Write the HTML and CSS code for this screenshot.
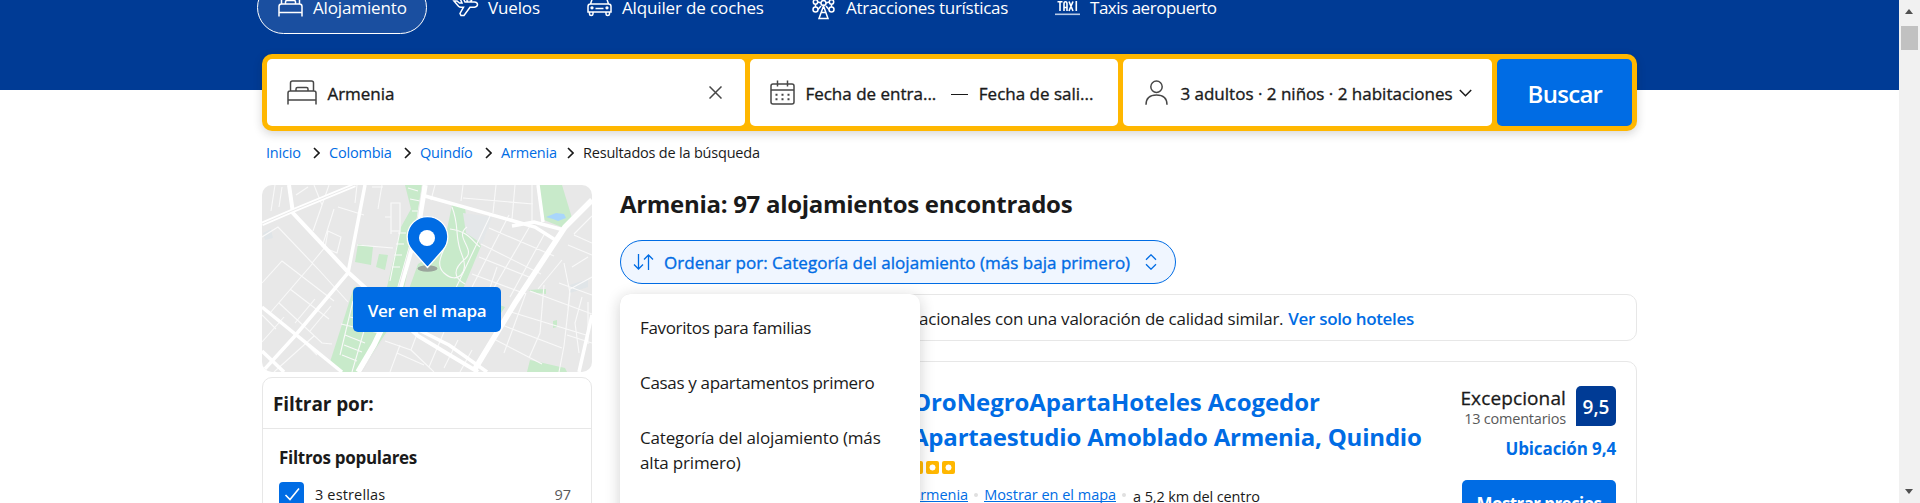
FILE: index.html
```html
<!DOCTYPE html>
<html lang="es">
<head>
<meta charset="utf-8">
<title>Armenia: 97 alojamientos encontrados</title>
<link rel="stylesheet" href="styles.css">
</head>
<body>
<div class="page">
  <header class="header">
    <nav class="nav">
      <a class="tab tab-active tab-stays"><svg class="tab-icon" viewBox="0 0 25 25"><path d="M3.500 11V4q0-2 2-2h14q2 0 2 2v7M1 23.500v-10q0-2.500 2.500-2.500h18q2.500 0 2.500 2.500v10M1 19.500h23M7.500 11V9q0-1.500 1.500-1.500h7q1.500 0 1.500 1.500v2"/></svg><span>Alojamiento</span></a>
      <a class="tab tab-flights"><svg class="tab-icon" viewBox="0 0 25 25"><path d="M1 8l4.500 5.200q1 1 2.500 1h2.500L7 20.500l1 2h3l6-8.300h4.500q3-.3 3-2.600T21.500 9H12L9.500 4h-3L9 10H6.500L4 8zM14.500 9l-1-3.500M17.500 9l1.500-2.500h-4"/></svg><span>Vuelos</span></a>
      <a class="tab tab-cars"><svg class="tab-icon" viewBox="0 0 25 25"><path d="M3.500 11l2-6q.7-2 2.500-2h9q1.800 0 2.500 2l2 6M3.500 11h18q2.500 0 2.500 2.500V19H1v-5.500Q1 11 3.500 11zM2.500 19v2q0 1.500 1.700 1.500T6 21v-2M19 19v2q0 1.500 1.700 1.500t1.800-1.500v-2M8.500 15.500h8"/><circle cx="5" cy="14.800" r=".9"/><circle cx="20" cy="14.800" r=".9"/></svg><span>Alquiler de coches</span></a>
      <a class="tab tab-sights"><svg class="tab-icon" viewBox="0 0 25 25"><circle cx="12.500" cy="10" r="2.500"/><circle cx="4.500" cy="9" r="2.200"/><circle cx="4.500" cy="16.500" r="2.500"/><circle cx="20.500" cy="9" r="2.200"/><circle cx="20.500" cy="16.500" r="2.500"/><path d="M12.500 13l-4.500 12.500h9L12.500 13zM7 16.500l3-3.500M18 16.500L15 13M4.500 11.500V14M20.500 11.500V14M7 9l3 1M18 9l-3 1M10.500 19.500h4"/></svg><span>Atracciones turísticas</span></a>
      <a class="tab tab-taxi"><svg class="tab-icon" viewBox="0 0 25 25"><path class="thick" d="M2.500 9.800h5M5 9.800V19M9 19v-7q0-2.200 1.500-2.200T12 12v7M9 15.500h3M14 9.500l4 9.500M18 9.500L14 19M21.300 9v10"/><path class="rule" d="M0 22.300h25"/></svg><span>Taxis aeropuerto</span></a>
    </nav>
  </header>

  <form class="search">
    <div class="field field-place">
      <svg class="icon-bed" viewBox="0 0 30 25"><path d="M3.500 11V3q0-2 2-2h19q2 0 2 2v8M1 24.500V13q0-2 2-2h24q2 0 2 2v11.500M1 20h28M9 11V9q0-1.500 1.500-1.500h9Q21 7.500 21 9v2"/></svg>
      <span class="field-text">Armenia</span>
      <svg class="icon-clear" viewBox="0 0 13 13"><path d="M.5.5l12 12M12.500.5l-12 12"/></svg>
    </div>
    <div class="field field-dates">
      <svg class="icon-cal" viewBox="0 0 25 25"><path d="M3 4h19q2 0 2 2v16q0 2-2 2H3q-2 0-2-2V6q0-2 2-2zM1 10h23M7.500.5v6M17.500.5v6"/><path class="dots" d="M5.500 14.800h2m4 0h2m4 0h2M5.500 19.300h2m4 0h2m4 0h2"/></svg>
      <span class="field-text date-from">Fecha de entra...</span>
      <span class="dash"></span>
      <span class="field-text">Fecha de sali...</span>
    </div>
    <div class="field field-guests">
      <svg class="icon-person" viewBox="0 0 23 25"><circle cx="11.500" cy="6.700" r="5.700"/><path d="M1 24.800C1 18.500 5 15 11.500 15S22 18.500 22 24.800"/></svg>
      <span class="field-text guests-text">3 adultos · 2 niños · 2 habitaciones</span>
      <svg class="icon-down" viewBox="0 0 13 8"><path d="M.8 1l5.700 5.700L12.200 1"/></svg>
    </div>
    <button class="search-btn" type="button">Buscar</button>
  </form>

  <ol class="crumbs">
    <li class="c-inicio"><a>Inicio</a></li>
    <li class="c-colombia"><svg viewBox="0 0 7 12"><path d="M1 1l5 5-5 5"/></svg><a>Colombia</a></li>
    <li class="c-quindio"><svg viewBox="0 0 7 12"><path d="M1 1l5 5-5 5"/></svg><a>Quindío</a></li>
    <li class="c-armenia"><svg viewBox="0 0 7 12"><path d="M1 1l5 5-5 5"/></svg><a>Armenia</a></li>
    <li><svg viewBox="0 0 7 12"><path d="M1 1l5 5-5 5"/></svg><span>Resultados de la búsqueda</span></li>
  </ol>

  <div class="columns">
    <aside class="side">
      <div class="map">
        <svg class="map-art" viewBox="0 0 330 187">
          <rect width="330" height="187" fill="#e8e8e8"/>
          <g fill="#c8eaca">
            <path d="M143 0h20l-9 44-12 60-12 35-32 48H80l-12-10 24-75h33l14-60 10-18z"/>
            <path d="M190 20l13 2 2 18 14 21-18 43h-54l9-25 25-15z"/>
            <path d="M277 0h23l10 33-8 10-20-8z"/>
            <path d="M96 59l15 3-2 18-16-3zM117 69l9 1-3 15-9-3zM266 105l18-1v5l-9-1zM291 136l4-1v7l-4 1zM268 175l35 8 2 4h-40zM235 119l8 3-8 12z"/>
          </g>
          <path d="M201 28l29 4-10 27-16-11z" fill="#e4e7e9"/>
          <path d="M284 32l10-4 8 1 2 4-8 3-5-2z" fill="#a9d6fb"/>
          <path d="M308 100l18-6v8l-18 6zM1 48l8-4 2 9-8 2z" fill="#e0e5e8"/>
          <g class="minor">
            <path d="M13 0l-4 26M20 2l-3 20M34 10l12-8M52 0l8 20M67 0l-16 46M95 0l-2 18M76 22l26 8M72 24l-12 38M0 52l16-10 40 42 30 33M50 78l14-17M66 46l13 6-4 16-12-5zM0 98l20-22 52 40M17 118l43 40 10 1M28 104l39 30M8 128L51 78M33 138l20-24M48 146l21-25M0 130l14 14M0 157l22-25M12 187l40-36M37 152l18 18M95 60l36 3M110 2l11 0M120 0l-4 24M129 18h9v28h-9zM123 32h6v17"/>
            <path d="M138 46l-10 50M144 48h-8M142 59h-8M140 70h-8M138 82h-8M146 3l10 3M148 14l10 2M150 26h8M79 139l38 9M91 116l-13 54M83 150l20 8M82 160l18 7M80 170l15 6M88 132l26 6M104 139l-14 48M123 156l26 9 13-35M138 160l-10 27M149 165l23 22M182 147l-15 35M196 155l-14 28M210 165l-12 22M135 168l27 12"/>
            <path d="M173 0l-4 15M201 0l-2 16M234 0l-3 28M253 0l-3 34M270 0v38M201 13l70 6M229 29l-37 78M227 43l65 28M219 59l60 30M217 72l55 22M210 89l54 20M205 104l31 12M247 30l-38 74M268 41l-38 65M283 48l-35 64M235 82l-12 35M268 106l62 23M249 127l75 23M240 140l60 23M230 153l50 26M264 108l-22 60M282 100l-4 48-11 25M302 78l6 30-6 53-5 26M300 75l-24 29M297 98l33 12M330 92l-22 12-2 20M310 82l16-10M306 60l24 10M312 50l18 8M330 31l-18 18M320 112l-7 26 4 30M326 117v42M305 150l25 8"/>
            <path d="M190 22c8 20 2 30 10 48s-5 30-18 18 8-30 2-36M205 42c-14 10 10 22-2 32s-12 18 0 25M188 44c18 2 22 12 30 18"/>
          </g>
          <g class="road">
            <path d="M163 0l-6 36-21 74-24 50-16 27" stroke-width="5.500"/>
            <path d="M0 39l30-13L93 0" stroke-width="4.500"/>
            <path d="M27 0l4 28 56 60 21 19 48 44 60 36" stroke-width="4"/>
            <path d="M103 0L86 88l-54 64L0 187" stroke-width="3.500"/>
            <path d="M0 122l80 65" stroke-width="3.500"/><path d="M0 166l22 21" stroke-width="3.500"/>
            <path d="M163 11l110 31 22 14M250 41l22-4 30 8M276 0l5 37" stroke-width="3.500"/>
            <path d="M330 15l-27 27-50 76-40 66" stroke-width="5.500"/>
            <path d="M157 145l30 15 38 27M330 130l-13 57" stroke-width="3.500"/>
          </g>
          <path d="M160 0l-5 36-20 72M126 146l-16 24-10 17M0 39l30-13L93 0" fill="none" stroke="#e4e4e4" stroke-width=".8"/>
          <ellipse cx="165.500" cy="83.500" rx="10" ry="3.300" fill="#8f9390" fill-opacity=".8"/>
          <path d="M165.500 82.500l-15.500-17.500a20.300 20.300 0 1 1 31 0z" fill="#006ce4" stroke="#fff" stroke-width="1.300"/>
          <circle cx="165" cy="53" r="8" fill="#fff"/>
        </svg>
        <button class="map-btn" type="button">Ver en el mapa</button>
      </div>
      <section class="filters">
        <h2 class="filters-title">Filtrar por:</h2>
        <div class="filters-body">
          <h3 class="filters-group">Filtros populares</h3>
          <label class="check-row">
            <span class="checkbox"><svg viewBox="0 0 25 25"><path d="M6.500 13l4.500 4.500 9-11"/></svg></span>
            <span class="check-name">3 estrellas</span>
            <span class="check-count">97</span>
          </label>
        </div>
      </section>
    </aside>

    <main class="main">
      <h1 class="heading">Armenia: 97 alojamientos encontrados</h1>
      <div class="sort-wrap">
        <button class="sort" type="button">
          <svg class="icon-sort" viewBox="0 0 21 16"><path d="M5.500 0v15M1 10.500L5.500 15l4.500-4.500M15.500 16V1M11 5.500L15.500 1 20 5.500"/></svg>
          <span>Ordenar por: Categoría del alojamiento (más baja primero)</span>
          <svg class="icon-updown" viewBox="0 0 12 16"><path d="M1 5.800L6 .8l5 5M1 10.200l5 5 5-5"/></svg>
        </button>
        <ul class="menu">
          <li class="m-family">Favoritos para familias</li>
          <li class="m-homes">Casas y apartamentos primero</li>
          <li>Categoría del alojamiento (más alta primero)</li>
        </ul>
      </div>
      <div class="banner"><span>acionales con una valoración de calidad similar.</span><a>Ver solo hoteles</a></div>
      <article class="card">
        <div class="card-info">
          <h3 class="card-title"><span class="title-line title-first">OroNegroApartaHoteles Acogedor</span><span class="title-line">Apartaestudio Amoblado Armenia, Quindio</span></h3>
          <div class="stars"><i></i><i></i><i></i></div>
          <div class="address"><a>Armenia</a><b></b><a>Mostrar en el mapa</a><b></b><span>a 5,2 km del centro</span></div>
        </div>
        <div class="card-side">
          <div class="review">
            <div class="review-text"><div class="review-word">Excepcional</div><div class="review-count">13 comentarios</div></div>
            <div class="score">9,5</div>
          </div>
          <div class="location">Ubicación 9,4</div>
          <button class="price-btn" type="button">Mostrar precios</button>
        </div>
      </article>
    </main>
  </div>
</div>
<div class="scrollbar"><span class="arrow-up"></span><span class="thumb"></span><span class="arrow-down"></span></div>
</body>
</html>
```
FILE: styles.css
```css
* { box-sizing: border-box; }
body {
  margin: 0; height: 503px; overflow: hidden; display: flex;
  font: 17px/25px "Open Sans", "Noto Sans", sans-serif;
  color: #1a1a1a; background: #fff;
}
h1, h2, h3, ul, ol { margin: 0; padding: 0; list-style: none; }
button { font: inherit; border: 0; padding: 0; }
svg { display: block; fill: none; stroke: currentColor; flex: none; }
.page { width: 1899px; height: 503px; overflow: hidden; }

/* header */
.header { height: 90px; background: #003b95; padding-left: 257px; }
.nav { display: flex; gap: 5px; }
.tab {
  display: flex; align-items: center; gap: 10px; height: 53px; margin-top: -19px;
  padding: 0 20px; border: 1px solid transparent; border-radius: 27px;
  color: #fff; white-space: nowrap; letter-spacing: -.14px;
}
.tab-active { background: #1a4fa0; border-color: #fff; }
.tab-stays { width: 170px; }
.tab-flights { width: 129px; }
.tab-cars { width: 219px; }
.tab-sights { width: 239px; letter-spacing: -.29px; }
.tab-taxi { letter-spacing: -.48px; }
.tab-icon { width: 25px; height: 25px; stroke-width: 1.5; margin-top: -4px; overflow: visible; }
.tab-stays .tab-icon { margin-top: -5px; }
.thick { stroke-width: 1.6; }
.rule { stroke: #b9cbe6; stroke-width: 1.6; }
.tab-taxi .tab-icon { margin-top: -7px; }

/* search form */
.search {
  position: relative; display: flex; gap: 5px; width: 1375px; height: 77px;
  margin: -36px 0 0 262.400px; padding: 5px; border-radius: 10px;
  background: #ffb700; box-shadow: 0 3px 10px rgba(26, 26, 26, .18);
}
.field { display: flex; align-items: center; background: #fff; border-radius: 5px; padding-left: 20px; white-space: nowrap; }
.field svg { color: #474747; stroke-width: 1.5; }
.field-place { width: 478px; padding-right: 23px; }
.field-dates { width: 368px; }
.field-guests { width: 369px; padding: 0 20px 0 22px; }
.field-text { padding-top: 2px; -webkit-text-stroke: .35px currentColor; }
.icon-bed { width: 30px; height: 25px; margin-right: 10px; }
.icon-clear { width: 13px; height: 13px; margin-left: auto; stroke-width: 1.3; }
.icon-cal { width: 25px; height: 25px; margin-right: 10px; stroke-width: 1.4; }
.field .dots { stroke-width: 2; }
.dash { width: 17px; height: 1.500px; background: #1a1a1a; margin: 4px 10.500px 0 15px; }
.icon-person { width: 23px; height: 25px; margin-right: 12px; stroke-width: 1.4; }
.field .icon-down { width: 13px; height: 8px; margin-left: auto; color: #1a1a1a; }
.search-btn {
  width: 135px; border-radius: 5px; background: #006ce4; color: #fff;
  font-size: 24px; font-weight: 600; letter-spacing: -.7px; padding-top: 1px;
}

/* breadcrumb */
.crumbs { display: flex; height: 24px; margin: 10px 0 0 266px; font-size: 14.500px; line-height: 24px; letter-spacing: -.2px; white-space: nowrap; }
.crumbs li { display: flex; align-items: center; }
.crumbs a { color: #006ce4; }
.crumbs svg { width: 7px; height: 12px; margin-right: 9px; stroke-width: 1.6; }
.c-inicio { width: 47px; }
.c-colombia { width: 91px; }
.c-quindio { width: 81px; }
.c-armenia { width: 82px; }

.columns { display: flex; gap: 28px; width: 1375px; margin: 20px 0 0 262px; }

/* sidebar */
.side { width: 330px; flex: none; }
.map { position: relative; height: 187px; border-radius: 10px; overflow: hidden; }
.map-art { width: 330px; height: 187px; stroke: none; }
.minor { fill: none; stroke: #f9f9f9; stroke-width: 1.1; }
.road { fill: none; stroke: #fff; }
.map-btn {
  position: absolute; left: 91px; top: 102.400px; width: 148px; height: 45px; padding-top: 2px;
  border-radius: 5px; background: #006ce4; color: #fff; font-weight: 600; letter-spacing: -.28px;
}
.filters { height: 300px; margin-top: 5px; border: 1px solid #e7e7e7; border-radius: 10px; }
.filters-title { height: 51px; padding-left: 10px; border-bottom: 1px solid #e7e7e7; font-size: 19px; line-height: 52px; letter-spacing: -.1px; }
.filters-body { padding: 16px 20px 0 16px; }
.filters-group { font-size: 17px; line-height: 25px; letter-spacing: -.3px; }
.check-row { display: flex; align-items: center; margin-top: 11px; font-size: 14.500px; }
.checkbox { width: 25px; height: 25px; border-radius: 4px; background: #006ce4; color: #fff; margin-right: 11px; }
.checkbox svg { stroke-width: 1.6; }
.check-name { letter-spacing: .15px; padding-top: 1px; }
.check-count { margin-left: auto; color: #595959; padding-top: 1px; }

/* results */
.main { flex: 1; }
.heading { margin-top: 1px; font-size: 24px; line-height: 35px; letter-spacing: -.3px; }
.sort-wrap { position: relative; margin-top: 19px; }
.sort {
  display: flex; align-items: center; width: 556px; height: 44px; padding-left: 12px;
  border: 1px solid #006ce4; border-radius: 22px; background: #f0f6ff; color: #006ce4;
  white-space: nowrap; -webkit-text-stroke: .35px currentColor; letter-spacing: .02px;
}
.sort span { padding-top: 1px; }
.icon-sort { width: 21px; height: 16px; margin-right: 10px; stroke-width: 1.3; }
.icon-updown { width: 12px; height: 16px; margin-left: 15px; stroke-width: 1.3; }
.menu {
  position: absolute; z-index: 2; left: 0; top: 54px; width: 300px; height: 300px;
  padding-top: 6px; background: #fff; border-radius: 10px; box-shadow: 0 3px 15px rgba(26, 26, 26, .2);
}
.menu li { padding: 15px 20px; line-height: 25px; letter-spacing: -.17px; }
.menu .m-family { letter-spacing: -.35px; }
.menu .m-homes { letter-spacing: -.33px; }
.banner {
  display: flex; gap: 5px; height: 47px; margin-top: 10px; padding-left: 298px;
  border: 1px solid #e7e7e7; border-radius: 10px; line-height: 48px; letter-spacing: -.23px; white-space: nowrap;
}
.banner a { color: #006ce4; font-weight: 600; letter-spacing: -.33px; }
.card {
  display: flex; justify-content: space-between; height: 300px; margin-top: 20px;
  padding: 20px 20px 0 291px; border: 1px solid #e7e7e7; border-radius: 10px; white-space: nowrap;
}
.card-title { margin-top: 2px; font-size: 24px; line-height: 35px; letter-spacing: -.2px; color: #006ce4; }
.title-line { display: block; }
.title-first { letter-spacing: -.07px; }
.stars { display: flex; gap: 3px; margin: 7px 0 0 -2px; }
.stars i { width: 13px; height: 13px; border-radius: 2px; background: radial-gradient(circle, #fff 2.700px, #ffb700 3.300px); }
.address { display: flex; align-items: center; margin: 7px 0 0 -1px; font-size: 14.500px; }
.address a { height: 16px; line-height: 17px; margin-bottom: 2px; color: #006ce4; border-bottom: 1px solid #006ce4; letter-spacing: -.02px; }
.address b { width: 4px; height: 4px; margin: 0 6px; border-radius: 2px; background: #e0e0e0; }
.address span { letter-spacing: -.12px; padding: 3px 0 0 1px; }
.card-side { display: flex; flex-direction: column; align-items: flex-end; padding-top: 4px; }
.review { display: flex; gap: 10px; }
.review-text { text-align: right; }
.review-word { font-size: 19px; line-height: 24px; letter-spacing: .12px; -webkit-text-stroke: .3px currentColor; }
.review-count { font-size: 14.500px; line-height: 17px; letter-spacing: -.22px; color: #595959; }
.score {
  width: 40px; height: 40px; border-radius: 5px 5px 5px 0; background: #003b95; color: #fff;
  font-size: 19px; font-weight: 600; line-height: 42px; text-align: center;
}
.location { margin-top: 9px; color: #006ce4; font-weight: 700; letter-spacing: -.12px; }
.price-btn { width: 154px; height: 45px; margin-top: 19px; padding-top: 2px; border-radius: 5px; background: #006ce4; color: #fff; font-weight: 700; letter-spacing: -.6px; }

/* scrollbar */
.scrollbar { width: 21px; height: 503px; display: flex; flex-direction: column; align-items: center; background: #f1f1f1; padding: 9px 1px 9px 0; }
.arrow-up { border: 4.500px solid transparent; border-top: 0; border-bottom: 5px solid #505050; }
.thumb { width: 17px; height: 24px; margin-top: 12px; background: #c1c1c1; }
.arrow-down { margin-top: auto; border: 4.500px solid transparent; border-bottom: 0; border-top: 5px solid #505050; }
```
